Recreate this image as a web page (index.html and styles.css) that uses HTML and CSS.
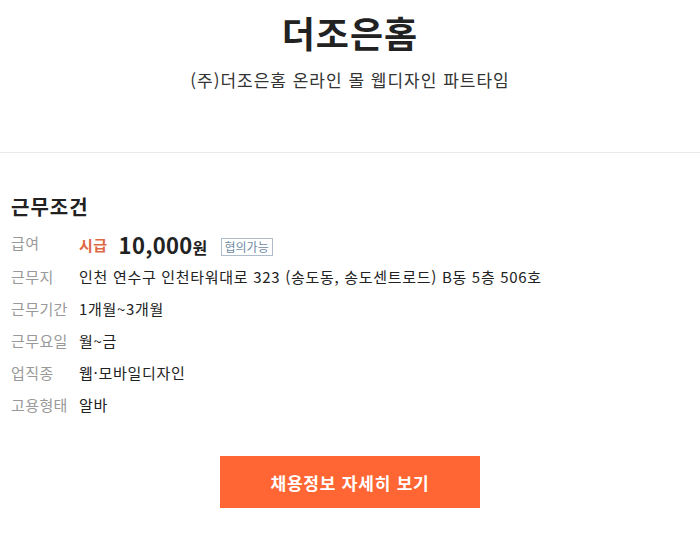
FILE: index.html
```html
<!DOCTYPE html>
<html lang="ko">
<head>
<meta charset="utf-8">
<link rel="stylesheet" href="styles.css">
</head>
<body>
<header class="head">
  <h1 class="company">더조은홈</h1>
  <p class="subtitle">(주)더조은홈 온라인 몰 웹디자인 파트타임</p>
</header>
<section class="cond">
  <h2 class="cond-title">근무조건</h2>
  <dl class="rows">
    <div class="row row-pay">
      <dt>급여</dt>
      <dd class="pay"><span class="pay-type">시급</span><span class="pay-amount">10,000<span class="won">원</span></span><span class="badge">협의가능</span></dd>
    </div>
    <div class="row"><dt>근무지</dt><dd>인천 연수구 인천타워대로 323 (송도동, 송도센트로드) B동 5층 506호</dd></div>
    <div class="row"><dt>근무기간</dt><dd>1개월~3개월</dd></div>
    <div class="row"><dt>근무요일</dt><dd>월~금</dd></div>
    <div class="row"><dt>업직종</dt><dd>웹·모바일디자인</dd></div>
    <div class="row"><dt>고용형태</dt><dd>알바</dd></div>
  </dl>
  <div class="btn-wrap"><a class="btn" href="#">채용정보 자세히 보기</a></div>
</section>
</body>
</html>
```
FILE: styles.css
```css
* { box-sizing: border-box; }
body {
  margin: 0;
  background: #fff;
  font-family: "Noto Sans CJK KR", "Noto Sans", sans-serif;
  color: #222;
}
.head {
  text-align: center;
  padding-top: 8px;
  height: 153px;
  border-bottom: 1px solid #ebebeb;
}
.company {
  margin: 0;
  font-size: 36px;
  line-height: 48px;
  font-weight: 700;
  letter-spacing: 1px;
  color: #222;
}
.subtitle {
  margin: 12px 0 0;
  font-size: 17px;
  line-height: 24px;
  letter-spacing: 1px;
  color: #333;
}
.cond {
  padding: 40px 11px 0;
}
.cond-title {
  margin: 0;
  font-size: 20px;
  line-height: 28px;
  font-weight: 700;
  letter-spacing: 1px;
  color: #222;
}
.rows {
  margin: 8px 0 0;
}
.row {
  display: flex;
  align-items: center;
  height: 32px;
}
.row dt {
  width: 68px;
  flex: none;
  font-size: 15px;
  letter-spacing: 0.4px;
  color: #999;
  line-height: 20px;
}
.row dd {
  margin: 0;
  font-size: 15px;
  letter-spacing: 0.7px;
  color: #222;
  line-height: 20px;
}
.row-pay dt {
  align-self: flex-start;
  padding-top: 4px;
}
.pay {
  display: flex;
  align-items: center;
}
.pay-type {
  color: #dd6844;
  font-weight: 700;
  font-size: 15px;
  letter-spacing: 0.5px;
  margin-right: 11px;
}
.pay-amount {
  font-size: 22px;
  font-weight: 700;
  color: #222;
  line-height: 24px;
  letter-spacing: 0.3px;
}
.won {
  font-size: 16px;
  margin-left: 0;
}
.badge {
  margin-left: 13px;
  border: 1px solid #aebccb;
  color: #6f8ba3;
  font-size: 12px;
  line-height: 14px;
  letter-spacing: 0;
  padding: 1px 3px;
  position: relative;
  top: 2px;
}
.btn-wrap {
  display: flex;
  justify-content: center;
  margin-top: 35px;
}
.btn {
  display: flex;
  align-items: center;
  justify-content: center;
  width: 260px;
  height: 52px;
  background: #ff6633;
  color: #fff;
  font-size: 17px;
  letter-spacing: 0.8px;
  font-weight: 700;
  text-decoration: none;
}
```
